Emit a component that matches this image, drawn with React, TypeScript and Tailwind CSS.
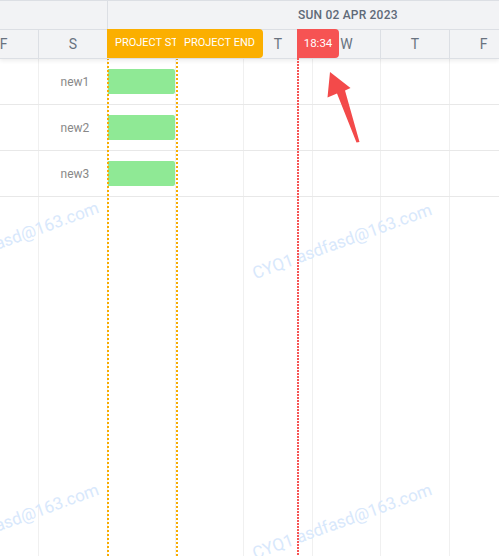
import React from 'react'

type Col = { w: string; day: string }

// day columns, the first one is cut by the left edge
const cols: Col[] = [
  { w: 'w-[70px]', day: 'F' },
  { w: 'w-[69px]', day: 'S' },
  { w: 'w-[68px]', day: 'S' },
  { w: 'w-[68px]', day: 'M' },
  { w: 'w-[69px]', day: 'T' },
  { w: 'w-[68px]', day: 'W' },
  { w: 'w-[69px]', day: 'T' },
  { w: 'w-[68px]', day: 'F' },
]

const tasks = ['new1', 'new2', 'new3']

function Watermark({ pos }: { pos: string }) {
  return (
    <div
      className={`pointer-events-none absolute ${pos} origin-bottom-left -rotate-[20deg] whitespace-nowrap text-[17px] leading-none text-[#d8e8fc]`}
    >
      CYQ1 asdfasd@163.com
    </div>
  )
}

export default function App() {
  return (
    <div
      className="relative flex h-[556px] w-[499px] flex-col overflow-hidden bg-white"
      style={{ fontFamily: 'Roboto, "Liberation Sans", sans-serif' }}
    >
      {/* Header */}
      <div className="relative z-10 shrink-0 border-t border-[#dcdfe4] bg-[#f2f3f5] shadow-[0_2px_4px_rgba(0,0,0,0.07)]">
        <div className="flex h-[29px] border-b border-[#dcdfe4]">
          <div className="w-[108px] shrink-0 border-r border-[#dcdfe4]" />
          <div className="flex items-center pl-[190px] text-[12px] font-medium tracking-[0.2px] text-[#5f6a78]">
            SUN 02 APR 2023
          </div>
        </div>
        <div className="ml-[-31px] flex h-[29px] border-b border-[#dcdfe4]">
          {cols.map((c, i) => (
            <div
              key={i}
              className={`${c.w} flex shrink-0 items-center justify-center border-r border-[#dcdfe4] text-[14px] text-[#68727f]`}
            >
              {c.day}
            </div>
          ))}
        </div>
      </div>

      {/* Body */}
      <div className="flex flex-1 flex-col">
        {tasks.map((name) => (
          <div key={name} className="ml-[-31px] flex h-[46px] shrink-0 border-b border-[#e8e8e8]">
            {cols.map((c, i) => (
              <div key={i} className={`${c.w} shrink-0 border-r border-[#f0f0f0]`}>
                {i === 1 && (
                  <div className="flex h-full items-center justify-center pl-[4px] text-[12px] text-[#888888]">
                    {name}
                  </div>
                )}
                {i === 2 && <div className="mt-[10px] h-[25px] rounded-r-[2px] bg-[#8fe995]" />}
              </div>
            ))}
          </div>
        ))}
        <div className="ml-[-31px] flex flex-1">
          {cols.map((c, i) => (
            <div key={i} className={`${c.w} shrink-0 border-r border-[#f0f0f0]`} />
          ))}
        </div>
      </div>

      {/* Project start / end markers */}
      <div className="absolute bottom-0 left-[107px] top-[58px] w-[2px] bg-[repeating-linear-gradient(to_bottom,#f9ad00_0_2px,transparent_2px_4px)]" />
      <div className="absolute bottom-0 left-[176px] top-[58px] w-[2px] bg-[repeating-linear-gradient(to_bottom,#f9ad00_0_2px,transparent_2px_4px)]" />
      <div className="absolute left-[107px] top-[29px] z-20 flex h-[29px] w-[69px] items-center overflow-hidden whitespace-nowrap bg-[#fbaf00] pl-[8px] text-[11px] text-white">
        PROJECT ST
      </div>
      <div className="absolute left-[176px] top-[29px] z-20 flex h-[29px] w-[87px] items-center rounded-r-[4px] bg-[#fbaf00] pl-[8px] text-[11px] text-white">
        PROJECT END
      </div>

      {/* Today marker */}
      <div className="absolute bottom-0 left-[297px] top-[58px] z-20 w-[2px] bg-[repeating-linear-gradient(to_bottom,#f65555_0_2px,transparent_2px_3px)]" />
      <div className="absolute left-[297px] top-[29px] z-20 flex h-[29px] w-[42px] items-center justify-center rounded-r-[4px] bg-[#f65353] text-[11.5px] text-white">
        18:34
      </div>

      {/* Annotation arrow */}
      <svg className="pointer-events-none absolute left-0 top-0 z-30" width="499" height="556">
        <polygon
          points="330,72 350.5,88 345,90.5 359.5,142 356.5,142.5 337,93.5 327.5,97.5"
          fill="#f34a4a"
        />
      </svg>

      {/* Watermarks */}
      <Watermark pos="left-[-77px] top-[263px]" />
      <Watermark pos="left-[256px] top-[265px]" />
      <Watermark pos="left-[-77px] top-[545px]" />
      <Watermark pos="left-[256px] top-[545px]" />
    </div>
  )
}
